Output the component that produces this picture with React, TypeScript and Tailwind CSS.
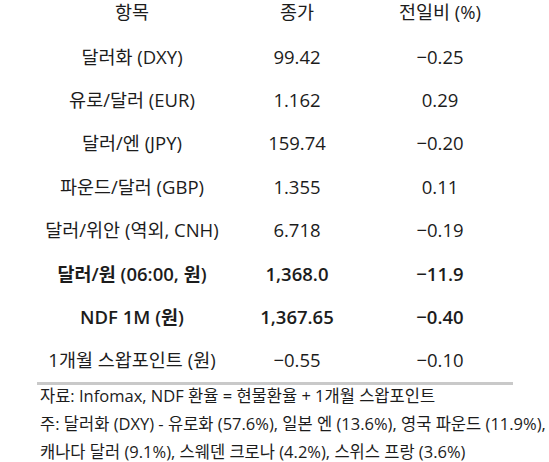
const rows = [
    { label: "달러화 (DXY)", close: "99.42", change: "−0.25" },
    { label: "유로/달러 (EUR)", close: "1.162", change: "0.29" },
    { label: "달러/엔 (JPY)", close: "159.74", change: "−0.20" },
    { label: "파운드/달러 (GBP)", close: "1.355", change: "0.11" },
    { label: "달러/위안 (역외, CNH)", close: "6.718", change: "−0.19" },
    { label: "달러/원 (06:00, 원)", close: "1,368.0", change: "−11.9", bold: true },
    { label: "NDF 1M (원)", close: "1,367.65", change: "−0.40", bold: true },
    { label: "1개월 스왑포인트 (원)", close: "−0.55", change: "−0.10" },
];

export default function App() {
    return (
        <div className="w-[549px] h-[462px] bg-white text-[#1c1c1c] font-['Open_Sans','Noto_Sans_CJK_KR',sans-serif] overflow-hidden">
            <div className="pl-[37px] w-[513px]">
                {/* Header */}
                <div className="grid grid-cols-[190px_140px_146px] mt-[1px] h-[21px] items-center text-[18.5px] leading-[21px] text-center">
                    <div>항목</div>
                    <div>종가</div>
                    <div>전일비 (%)</div>
                </div>

                {/* Body */}
                <div className="mt-[13px]">
                    {rows.map((row) => (
                        <div
                            key={row.label}
                            className={
                                row.bold
                                    ? "grid grid-cols-[190px_140px_146px] h-[43.4px] items-center text-center text-[18.5px] leading-[22px] font-semibold"
                                    : "grid grid-cols-[190px_140px_146px] h-[43.4px] items-center text-center text-[18.5px] leading-[22px]"
                            }
                        >
                            <div>{row.label}</div>
                            <div>{row.close}</div>
                            <div>{row.change}</div>
                        </div>
                    ))}
                </div>

                <div className="h-[3px] bg-[#c9c9c9]" />
            </div>

            {/* Notes */}
            <div className="-mt-[3px] pl-[40px] text-[16.5px] leading-[28px] whitespace-nowrap">
                <div>자료: Infomax, NDF 환율 = 현물환율 + 1개월 스왑포인트</div>
                <div>주: 달러화 (DXY) - 유로화 (57.6%), 일본 엔 (13.6%), 영국 파운드 (11.9%),</div>
                <div>캐나다 달러 (9.1%), 스웨덴 크로나 (4.2%), 스위스 프랑 (3.6%)</div>
            </div>
        </div>
    );
}
